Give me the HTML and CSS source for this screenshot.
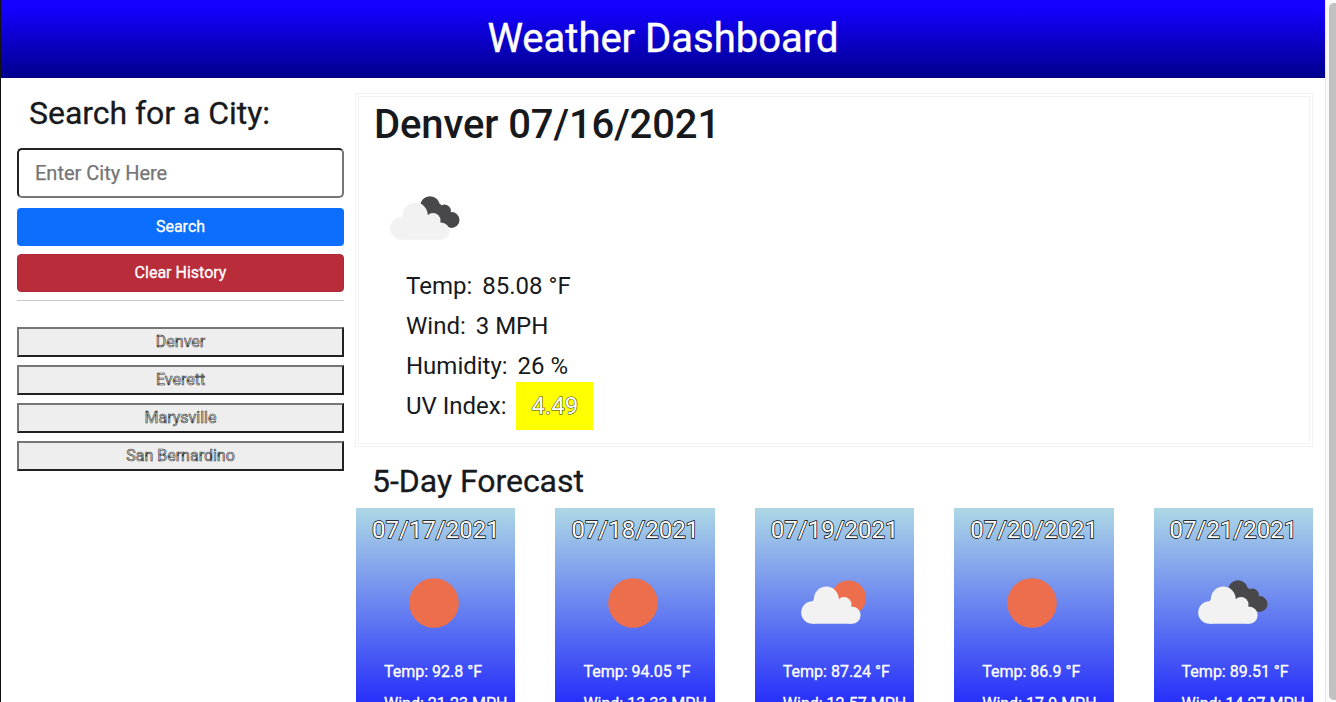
FILE: index.html
```html
<!DOCTYPE html>
<html lang="en">
<head>
<meta charset="utf-8">
<title>Weather Dashboard</title>
<link rel="stylesheet" href="styles.css">
</head>
<body>
<svg class="defs" aria-hidden="true">
  <symbol id="clouds" viewBox="0 0 70 44">
    <g class="dark">
      <circle cx="40" cy="10" r="9.800"/><circle cx="54.500" cy="15" r="6.400"/><circle cx="61.600" cy="24" r="7.900"/>
      <path d="M31 10L50 7.500L60 22L59 31L38 20Z"/>
    </g>
    <g class="light">
      <circle cx="11.500" cy="32.500" r="11.300"/><circle cx="25.300" cy="19" r="12.400"/><circle cx="43" cy="24.500" r="7.500"/><circle cx="51" cy="35.200" r="8.600"/>
      <path d="M11.500 43.800V21.500L13 19H37L50 26.800L51 43.800Z"/>
    </g>
  </symbol>
  <symbol id="sun" viewBox="0 0 50 50"><circle class="orange" cx="25" cy="25" r="24.800"/></symbol>
  <symbol id="partly" viewBox="0 0 70 44">
    <circle class="orange" cx="47.500" cy="18" r="17.500"/>
    <g class="light">
      <circle cx="11.500" cy="32.500" r="11.300"/><circle cx="25.300" cy="19" r="12.400"/><circle cx="43" cy="24.500" r="7.500"/><circle cx="51" cy="35.200" r="8.600"/>
      <path d="M11.500 43.800V21.500L13 19H37L50 26.800L51 43.800Z"/>
    </g>
  </symbol>
</svg>
<div class="page">
  <header class="header"><h1>Weather Dashboard</h1></header>
  <div class="layout">
    <aside class="sidebar">
      <h2>Search for a City:</h2>
      <input class="city-input" type="text" placeholder="Enter City Here">
      <button class="btn search">Search</button>
      <button class="btn clear">Clear History</button>
      <hr>
      <div class="history">
        <button>Denver</button><button>Everett</button><button>Marysville</button><button>San Bernardino</button>
      </div>
    </aside>
    <main class="main">
      <section class="today">
        <h2>Denver 07/16/2021</h2>
        <svg class="today-icon"><use href="#clouds"/></svg>
        <ul>
          <li>Temp: <span>85.08 °F</span></li>
          <li>Wind: <span>3 MPH</span></li>
          <li>Humidity: <span>26 %</span></li>
          <li>UV Index: <span class="uv">4.49</span></li>
        </ul>
      </section>
      <h2 class="forecast-title">5-Day Forecast</h2>
      <section class="forecast">
        <article><h3>07/17/2021</h3><div class="icon"><svg class="sun"><use href="#sun"/></svg></div><p>Temp: 92.8 °F</p><p>Wind: 21.23 MPH</p></article>
        <article><h3>07/18/2021</h3><div class="icon"><svg class="sun"><use href="#sun"/></svg></div><p>Temp: 94.05 °F</p><p>Wind: 13.33 MPH</p></article>
        <article><h3>07/19/2021</h3><div class="icon"><svg class="cloud partly"><use href="#partly"/></svg></div><p>Temp: 87.24 °F</p><p>Wind: 12.57 MPH</p></article>
        <article><h3>07/20/2021</h3><div class="icon"><svg class="sun"><use href="#sun"/></svg></div><p>Temp: 86.9 °F</p><p>Wind: 17.9 MPH</p></article>
        <article><h3>07/21/2021</h3><div class="icon"><svg class="cloud"><use href="#clouds"/></svg></div><p>Temp: 89.51 °F</p><p>Wind: 14.27 MPH</p></article>
      </section>
    </main>
  </div>
</div>
<div class="scrollbar"><div class="thumb"></div></div>
</body>
</html>
```
FILE: styles.css
```css
* { box-sizing: border-box; }
body {
  margin: 0;
  height: 702px;
  overflow: hidden;
  display: flex;
  font-family: Roboto, "Liberation Sans", sans-serif;
  font-size: 16px;
  line-height: 24px;
  color: #17191c;
  background: #fff;
}
h1, h2, h3, p, ul { margin: 0; padding: 0; font-weight: 400; }
.defs { position: absolute; width: 0; height: 0; }
.dark { fill: #48484a; }
.light { fill: #f2f2f3; }
.orange { fill: #ec6e4c; }
.page { width: 1325px; height: 702px; overflow: hidden; border-left: 1px solid #111; }
.header {
  height: 78px;
  background: linear-gradient(#1400ff 10%, #00008b);
  color: #fff;
  text-align: center;
}
.header h1 { font-size: 40px; line-height: 48px; padding-top: 15px; -webkit-text-stroke: .4px #fff; }
.layout { display: flex; padding: 15px 12px 0 16px; gap: 11px; }
.sidebar { width: 327px; display: flex; flex-direction: column; }
.sidebar h2 { font-size: 32px; line-height: 38px; padding: 1px 0 0 12px; letter-spacing: -.04px; -webkit-text-stroke: .3px #17191c; }
.city-input {
  height: 50px;
  margin: 16px 0 10px;
  padding: 0 16px;
  border: 2px solid;
  border-color: #222 #767676 #767676 #222;
  border-radius: 5px;
  font: 20px Roboto, sans-serif;
  background: #fff;
}
.city-input::placeholder { color: #757575; -webkit-text-stroke: .25px #757575; }
.btn {
  height: 38px;
  margin-bottom: 8px;
  padding: 0 6px;
  border: 0;
  border-radius: 4px;
  color: #fff;
  font: 16px/36px Roboto, sans-serif;
  -webkit-text-stroke: .3px #fff;
}
.search { background: #0b6efd; }
.clear { background: #b92d3b; border: 1px solid #ad2b38; padding-bottom: 1px; line-height: 35px; }
hr { width: 100%; height: 1px; margin: 0 0 26px; border: 0; background: #c8c8c8; }
.history { display: grid; gap: 8px; }
.history button {
  height: 30px;
  padding: 0 0 2px;
  border: 2px solid;
  border-color: #767676 #212121 #212121 #767676;
  background: #eee;
  color: #ddd;
  font: 16px Roboto, sans-serif;
  -webkit-text-stroke: .6px #333;
}
.main { width: 958px; }
.today { height: 354px; border: 4px double #f2f2f2; padding: 3px 0 0 15px; }
.today h2 { font-size: 40px; line-height: 48px; padding-top: 1px; font-weight: 500; letter-spacing: -.11px; }
.today-icon { display: block; width: 70px; height: 44px; margin: 47px 0 0 16px; }
.today ul { list-style: none; padding: 26px 0 0 32px; font-size: 24px; line-height: 40px; }
.today li { height: 40px; }
.today li span { margin-left: 4px; }
.today li .uv {
  display: inline-block;
  height: 48px;
  margin: -4px 0 0 3px;
  padding: 0 15px 0 16px;
  line-height: 48px;
  background: #ff0;
  color: #fff;
  -webkit-text-stroke: 1px #333;
  paint-order: stroke fill;
}
.forecast-title { font-size: 32px; line-height: 38px; padding: 15px 0 0 17px; letter-spacing: -.03px; -webkit-text-stroke: .3px #17191c; }
.forecast { display: grid; grid-template-columns: repeat(5, 1fr); gap: 40px; padding: 8px 0 0 1px; }
.forecast article {
  height: 270px;
  padding: 7px 0 0 16px;
  background: linear-gradient(#add8e6, #0000ff 250px);
  color: #fff;
  white-space: nowrap;
}
.forecast h3 { font-size: 24px; line-height: 30px; -webkit-text-stroke: 1.4px #000; paint-order: stroke fill; }
.icon { height: 115px; display: flex; align-items: center; }
.sun { width: 50px; height: 50px; margin: 0 0 0 37px; }
.cloud { width: 70px; height: 44px; margin: 0 0 1px 28px; }
.partly { margin-left: 30px; }
.forecast p { height: 32px; padding-left: 12px; -webkit-text-stroke: .3px #fff; }
.scrollbar { width: 11px; height: 702px; padding: 3px 0 2px 3px; border-left: 1px solid #e8e8e8; background: #fafafa; }
.thumb { height: 697px; border-radius: 5px 0 0 5px; background: #c1c1c1; }
```
